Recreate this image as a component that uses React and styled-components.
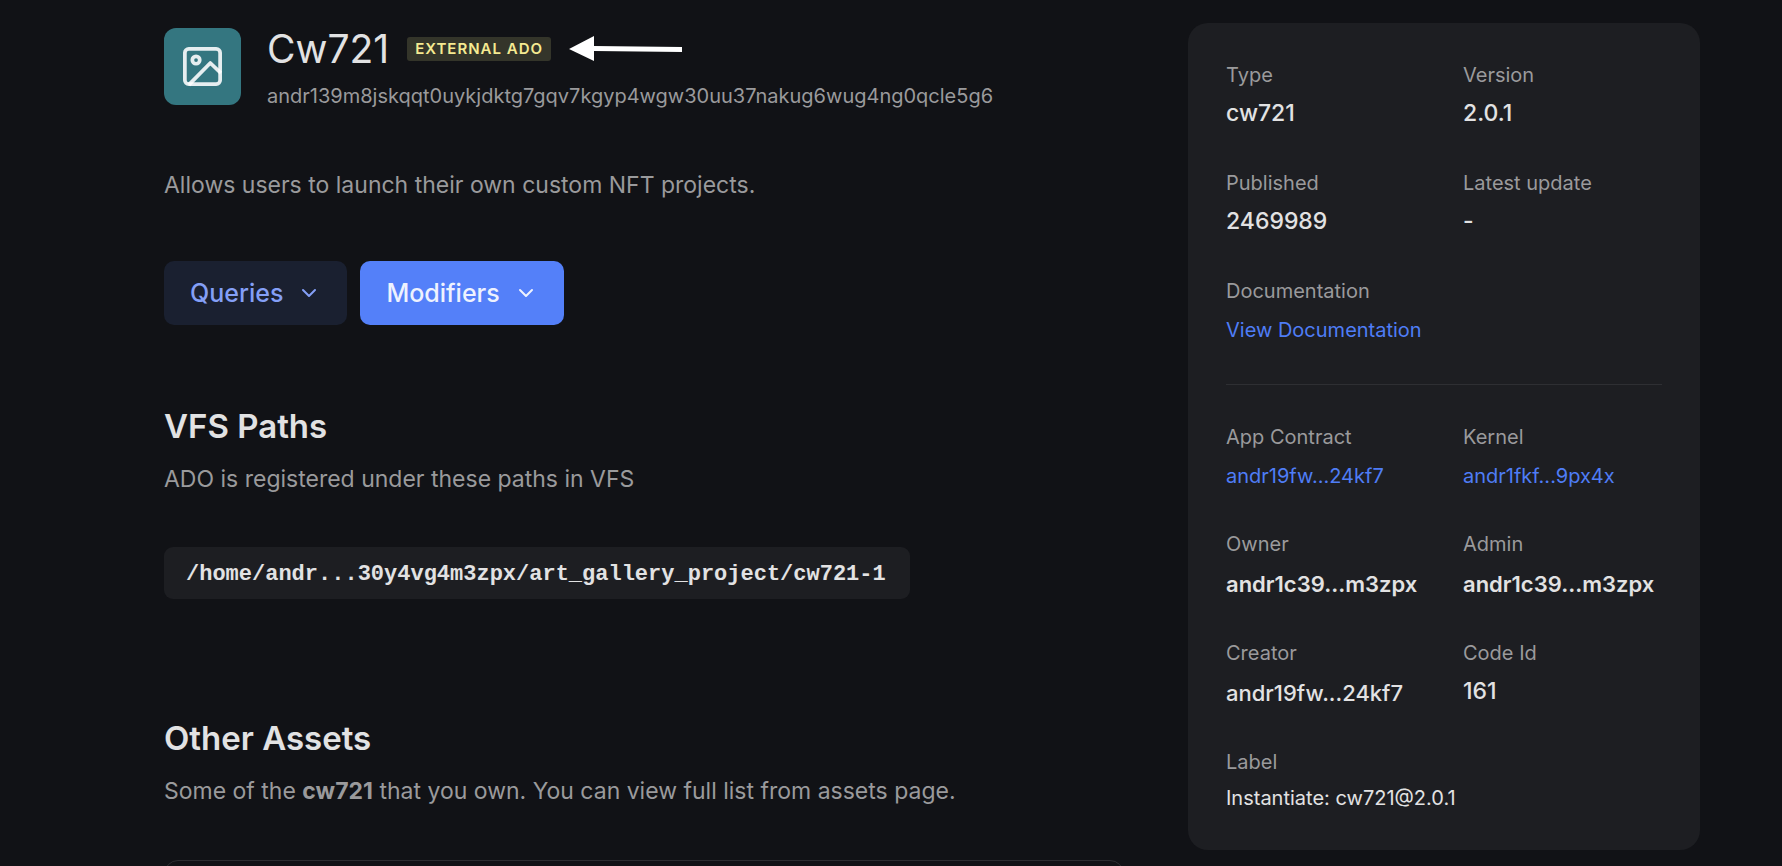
import React from "react";
import styled, { createGlobalStyle } from "styled-components";
import { ChevronDown } from "lucide-react";

const GlobalStyle = createGlobalStyle`
  *, *::before, *::after { box-sizing: border-box; }
  body {
    margin: 0;
    background: #111216;
    color: #e2e2e3;
    font-family: Inter, "Liberation Sans", sans-serif;
    -webkit-font-smoothing: antialiased;
  }
  h1, h2, p, dl, dt, dd { margin: 0; }
`;

const Page = styled.div`
  display: grid;
  grid-template-columns: minmax(0, 15fr) minmax(0, 8fr);
  align-items: start;
  gap: 64px;
  height: 100vh;
  overflow-y: auto;
  scrollbar-width: none;
  padding: 23px 82px 0 164px;
`;

const Main = styled.main`
  padding-top: 5px;
`;

const Header = styled.header`
  display: flex;
  align-items: flex-start;
  gap: 26px;
`;

const IconTile = styled.div`
  display: flex;
  align-items: center;
  justify-content: center;
  flex: none;
  width: 77px;
  height: 77px;
  border-radius: 12px;
  background: #347680;
`;

const HeaderText = styled.div`
  display: flex;
  flex-direction: column;
  gap: 12px;
`;

const TitleRow = styled.div`
  display: flex;
  align-items: center;
  gap: 18px;
`;

const Title = styled.h1`
  font-size: 39px;
  line-height: 42px;
  font-weight: 400;
`;

const Badge = styled.span`
  padding: 0 8px;
  border-radius: 3px;
  background: #34352a;
  color: #f5ea91;
  font-size: 15px;
  line-height: 24px;
  font-weight: 600;
  letter-spacing: 1px;
`;

const Address = styled.p`
  font-size: 20px;
  line-height: 28px;
  color: #9a9a9c;
`;

const Lead = styled.p`
  font-size: 23px;
  line-height: 32px;
  color: #9a9a9c;
`;

const Description = styled(Lead)`
  margin-top: 59px;
`;

const Actions = styled.div`
  display: flex;
  gap: 13px;
  margin-top: 60px;
`;

const ActionButton = styled.button`
  display: flex;
  align-items: center;
  gap: 14px;
  height: 64px;
  padding: 0 26px;
  border: 0;
  border-radius: 10px;
  background: ${(p) => (p.$primary ? "#5480f9" : "#1a2030")};
  color: ${(p) => (p.$primary ? "#eef2fe" : "#849ff6")};
  font: 500 25px/32px Inter, "Liberation Sans", sans-serif;
  cursor: pointer;
`;

const Section = styled.section`
  margin-top: ${(p) => p.$gap}px;
`;

const SectionTitle = styled.h2`
  margin-bottom: 15px;
  font-size: 33px;
  line-height: 44px;
  font-weight: 600;
`;

const PathChip = styled.code`
  display: inline-block;
  margin-top: 52px;
  padding: 3px 24px 0 22px;
  border-radius: 9px;
  background: #1d1e22;
  font: 700 22px/49px "Liberation Mono", monospace;
  vertical-align: top;
`;

const AssetCard = styled.div`
  height: 120px;
  margin-top: 53px;
  border: 1px solid #2c2d31;
  border-radius: 14px;
`;

const Sidebar = styled.aside`
  padding: 38px;
  border-radius: 20px;
  background: #1d1e22;
`;

const Facts = styled.dl`
  display: grid;
  grid-template-columns: 1fr 1fr;
  gap: ${(p) => p.$rowGap}px 38px;

  & + & {
    margin-top: 37px;
    padding-top: 38px;
    border-top: 1px solid #2e2f33;
  }
`;

const Fact = styled.div`
  display: flex;
  flex-direction: column;
  gap: 8px;
  grid-column: ${(p) => (p.$wide ? "1 / -1" : "auto")};
  white-space: nowrap;
`;

const FactLabel = styled.dt`
  font-size: 20px;
  line-height: 28px;
  color: #9a9a9c;
`;

const valueKinds = {
  plain: "500 23px/32px",
  link: "400 20px/34px",
  address: "500 22px/36px",
  strong: "600 22px/36px",
  note: "400 20px/28px",
};

const FactValue = styled.dd`
  font: ${(p) => valueKinds[p.$kind]} Inter, "Liberation Sans", sans-serif;
`;

const FactLink = styled.a`
  color: #4f7df6;
  text-decoration: none;
`;

const summary = [
  { label: "Type", value: "cw721", kind: "plain" },
  { label: "Version", value: "2.0.1", kind: "plain" },
  { label: "Published", value: "2469989", kind: "plain" },
  { label: "Latest update", value: "-", kind: "plain" },
  { label: "Documentation", value: "View Documentation", kind: "link", wide: true },
];

const contract = [
  { label: "App Contract", value: "andr19fw...24kf7", kind: "link" },
  { label: "Kernel", value: "andr1fkf...9px4x", kind: "link" },
  { label: "Owner", value: "andr1c39...m3zpx", kind: "strong" },
  { label: "Admin", value: "andr1c39...m3zpx", kind: "strong" },
  { label: "Creator", value: "andr19fw...24kf7", kind: "address" },
  { label: "Code Id", value: "161", kind: "plain" },
  { label: "Label", value: "Instantiate: cw721@2.0.1", kind: "note", wide: true },
];

function FactList({ items, rowGap }) {
  return (
    <Facts $rowGap={rowGap}>
      {items.map((item) => (
        <Fact key={item.label} $wide={item.wide}>
          <FactLabel>{item.label}</FactLabel>
          <FactValue $kind={item.kind}>
            {item.kind === "link" ? <FactLink href="#">{item.value}</FactLink> : item.value}
          </FactValue>
        </Fact>
      ))}
    </Facts>
  );
}

function ImageIcon() {
  return (
    <svg width="47" height="47" viewBox="0 0 24 24" fill="none" stroke="#fff" strokeOpacity="0.88" strokeWidth="1.9" strokeLinejoin="round" aria-hidden="true">
      <rect x="3" y="3" width="18" height="18" rx="2" />
      <circle cx="8.7" cy="8.7" r="1.9" />
      <path d="M21.4 15.4l-5.4-5.2L5 21.4" />
    </svg>
  );
}

function Arrow() {
  return (
    <svg width="114" height="26" viewBox="0 0 114 26" fill="#fff" aria-hidden="true">
      <path d="M0 13L25 0v10L113 11v5L25 15v10z" />
    </svg>
  );
}

export default function App() {
  return (
    <>
      <GlobalStyle />
      <Page>
        <Main>
          <Header>
            <IconTile>
              <ImageIcon />
            </IconTile>
            <HeaderText>
              <TitleRow>
                <Title>Cw721</Title>
                <Badge>EXTERNAL ADO</Badge>
                <Arrow />
              </TitleRow>
              <Address>andr139m8jskqqt0uykjdktg7gqv7kgyp4wgw30uu37nakug6wug4ng0qcle5g6</Address>
            </HeaderText>
          </Header>
          <Description>Allows users to launch their own custom NFT projects.</Description>
          <Actions>
            <ActionButton type="button">
              Queries
              <ChevronDown size={24} strokeWidth={2} aria-hidden="true" />
            </ActionButton>
            <ActionButton type="button" $primary>
              Modifiers
              <ChevronDown size={24} strokeWidth={2} aria-hidden="true" />
            </ActionButton>
          </Actions>
          <Section $gap={79}>
            <SectionTitle>VFS Paths</SectionTitle>
            <Lead>ADO is registered under these paths in VFS</Lead>
            <PathChip>/home/andr...30y4vg4m3zpx/art_gallery_project/cw721-1</PathChip>
          </Section>
          <Section $gap={117}>
            <SectionTitle>Other Assets</SectionTitle>
            <Lead>
              Some of the <b>cw721</b> that you own. You can view full list from assets page.
            </Lead>
            <AssetCard />
          </Section>
        </Main>
        <Sidebar>
          <FactList items={summary} rowGap={40} />
          <FactList items={contract} rowGap={37} />
        </Sidebar>
      </Page>
    </>
  );
}
